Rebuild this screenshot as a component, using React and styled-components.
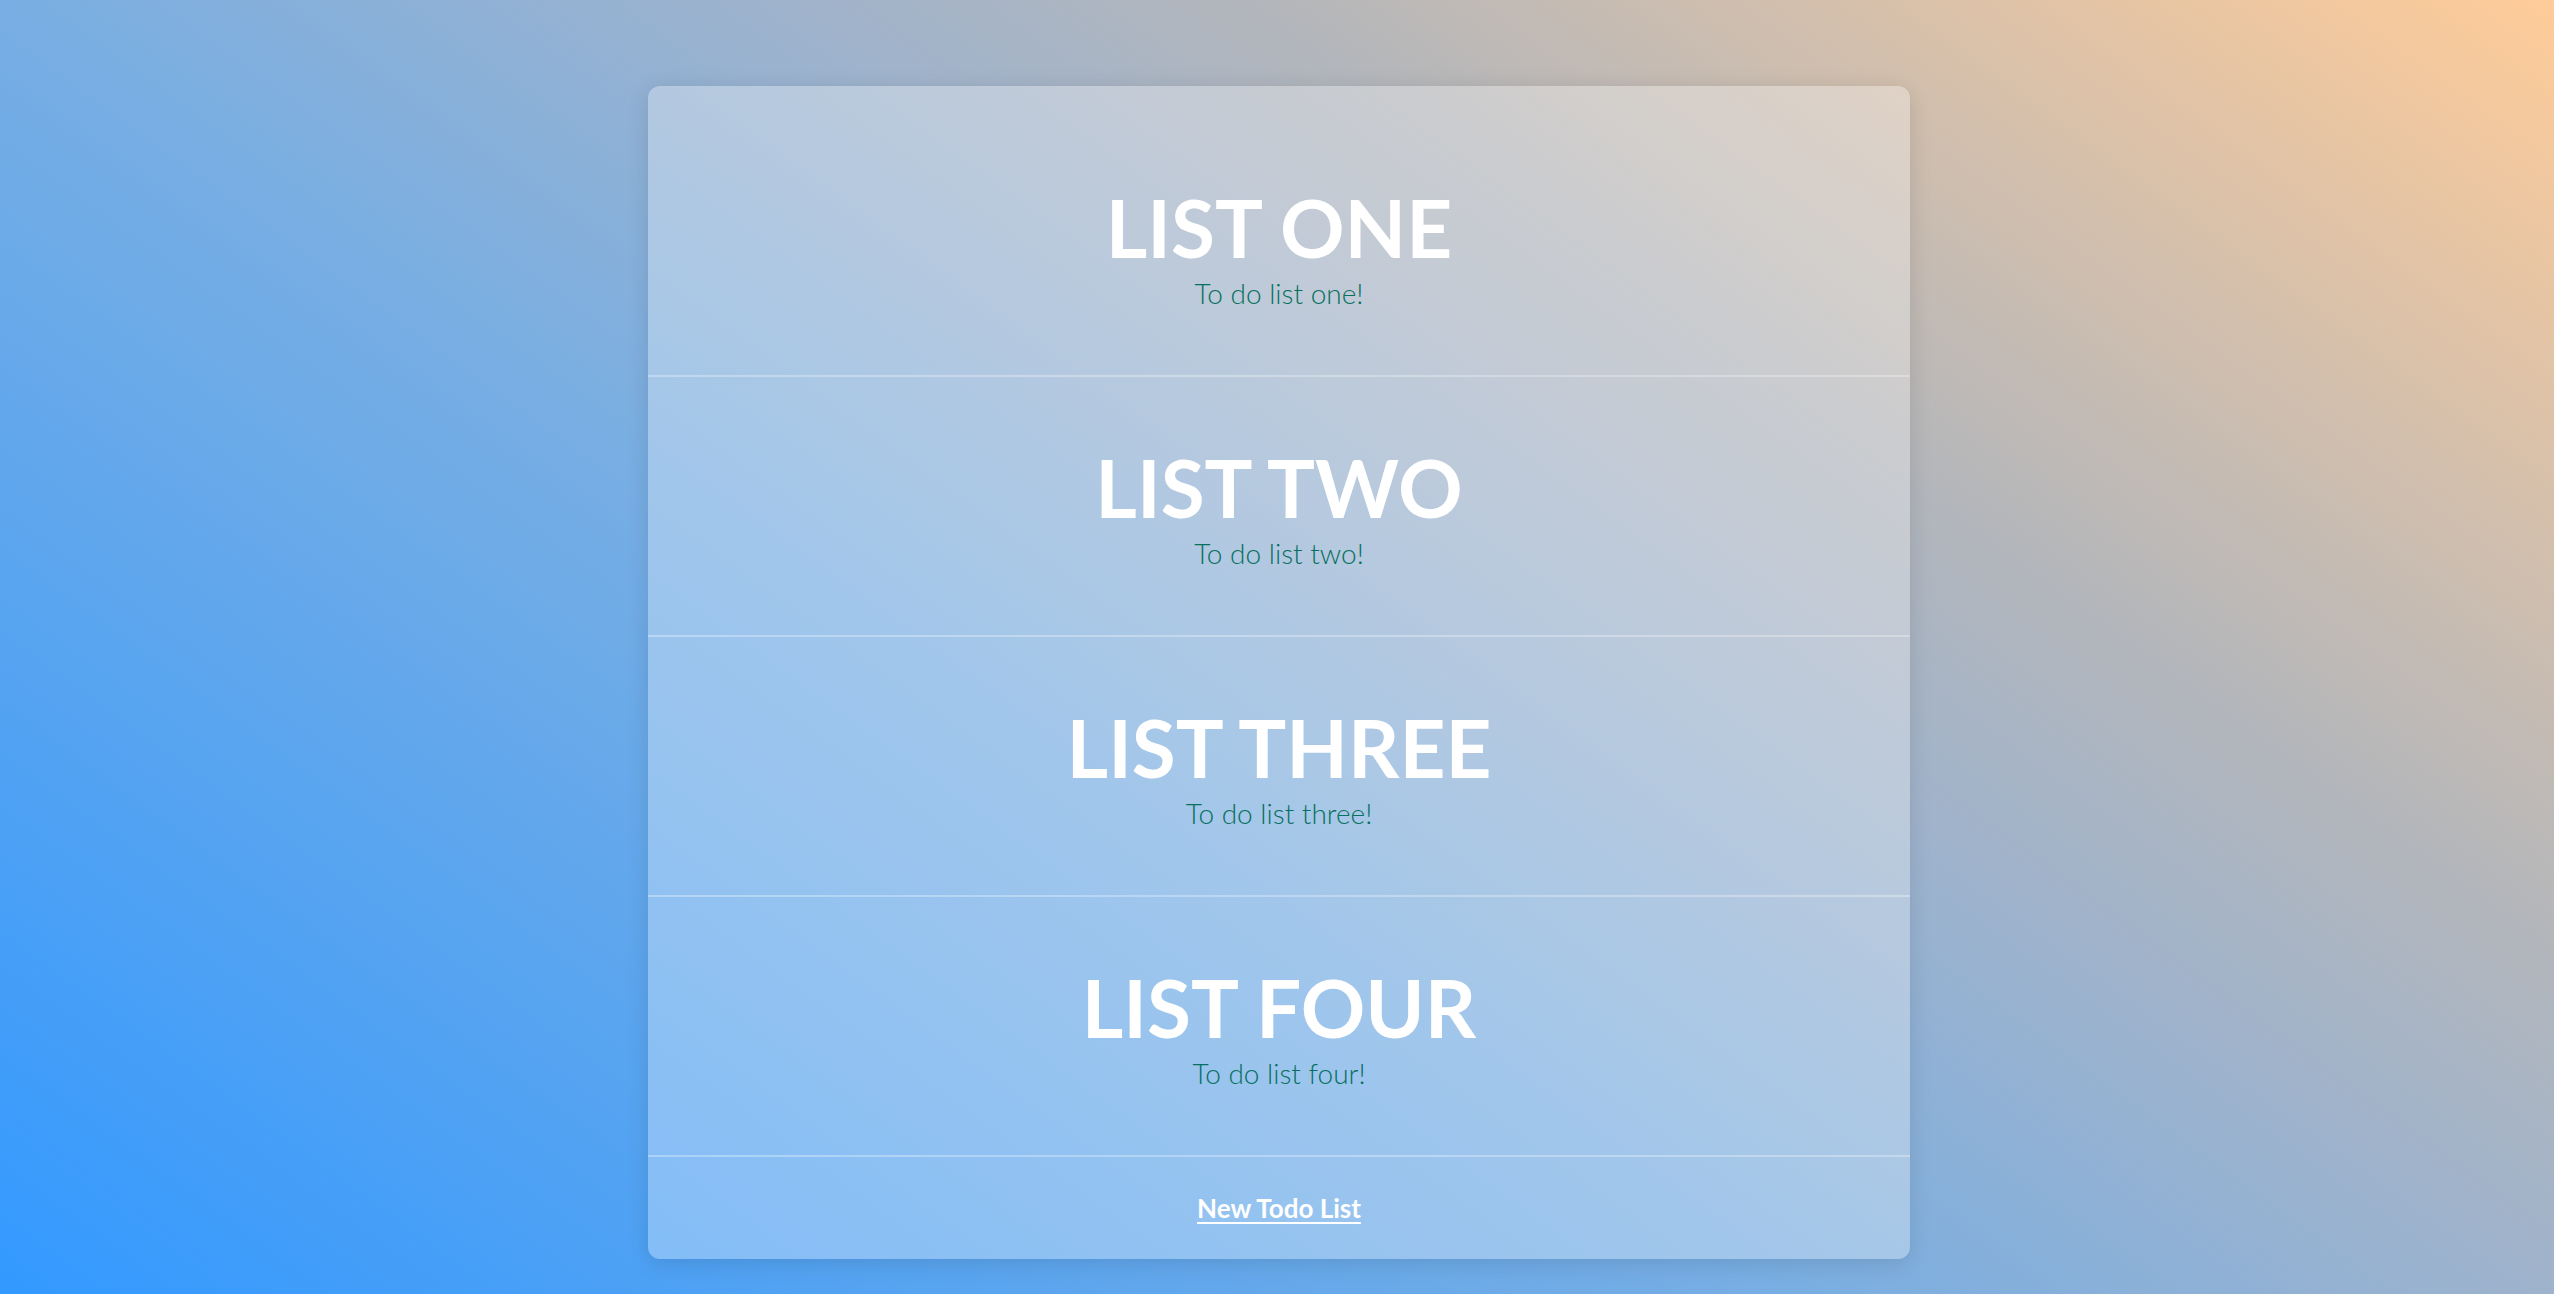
import styled, { createGlobalStyle } from 'styled-components';

const GlobalStyle = createGlobalStyle`
  html, body {
    margin: 0;
    padding: 0;
    min-height: 100%;
  }
  body {
    min-height: 100vh;
    font-family: 'Lato', 'Liberation Sans', sans-serif;
    background: linear-gradient(
      36deg,
      #3399ff 0%,
      #78aee3 41%,
      #9fb3cc 59%,
      #b3b6bb 70%,
      #ffcc99 100%
    );
    background-attachment: fixed;
  }
`;

const Page = styled.div`
  display: flex;
  justify-content: center;
  padding: 86px 0 34px 4px;
`;

const Card = styled.div`
  width: 1262px;
  padding-top: 31px;
  border-radius: 12px;
  background: rgba(255, 255, 255, 0.3);
  box-shadow: 0 4px 22px rgba(0, 0, 0, 0.12);
  overflow: hidden;
`;

const ListRow = styled.div`
  display: flex;
  flex-direction: column;
  align-items: center;
  padding: 68px 0 64px;
  border-bottom: 2px solid rgba(255, 255, 255, 0.3);
  cursor: pointer;
`;

const Title = styled.h1`
  margin: 0;
  font-family: 'Lato', 'Liberation Sans', sans-serif;
  font-weight: 700;
  font-size: 80px;
  line-height: 84px;
  color: #fff;
`;

const Subtitle = styled.p`
  margin: 7px 0 0;
  font-family: 'Lato', 'Liberation Sans', sans-serif;
  font-weight: 300;
  font-size: 28px;
  line-height: 35px;
  color: #07705f;
`;

const Footer = styled.div`
  display: flex;
  align-items: center;
  justify-content: center;
  height: 102px;
`;

const NewLink = styled.a`
  font-family: 'Lato', 'Liberation Sans', sans-serif;
  font-weight: 700;
  font-size: 26px;
  color: #fff;
  text-decoration: underline;
  text-decoration-thickness: 2px;
  text-underline-offset: 4px;
  cursor: pointer;
`;

const lists = [
  { title: 'LIST ONE', text: 'To do list one!' },
  { title: 'LIST TWO', text: 'To do list two!' },
  { title: 'LIST THREE', text: 'To do list three!' },
  { title: 'LIST FOUR', text: 'To do list four!' },
];

const App = () => (
  <>
    <GlobalStyle />
    <Page>
      <Card>
        {lists.map((list) => (
          <ListRow key={list.title}>
            <Title>{list.title}</Title>
            <Subtitle>{list.text}</Subtitle>
          </ListRow>
        ))}
        <Footer>
          <NewLink href="#">New Todo List</NewLink>
        </Footer>
      </Card>
    </Page>
  </>
);

export default App;
